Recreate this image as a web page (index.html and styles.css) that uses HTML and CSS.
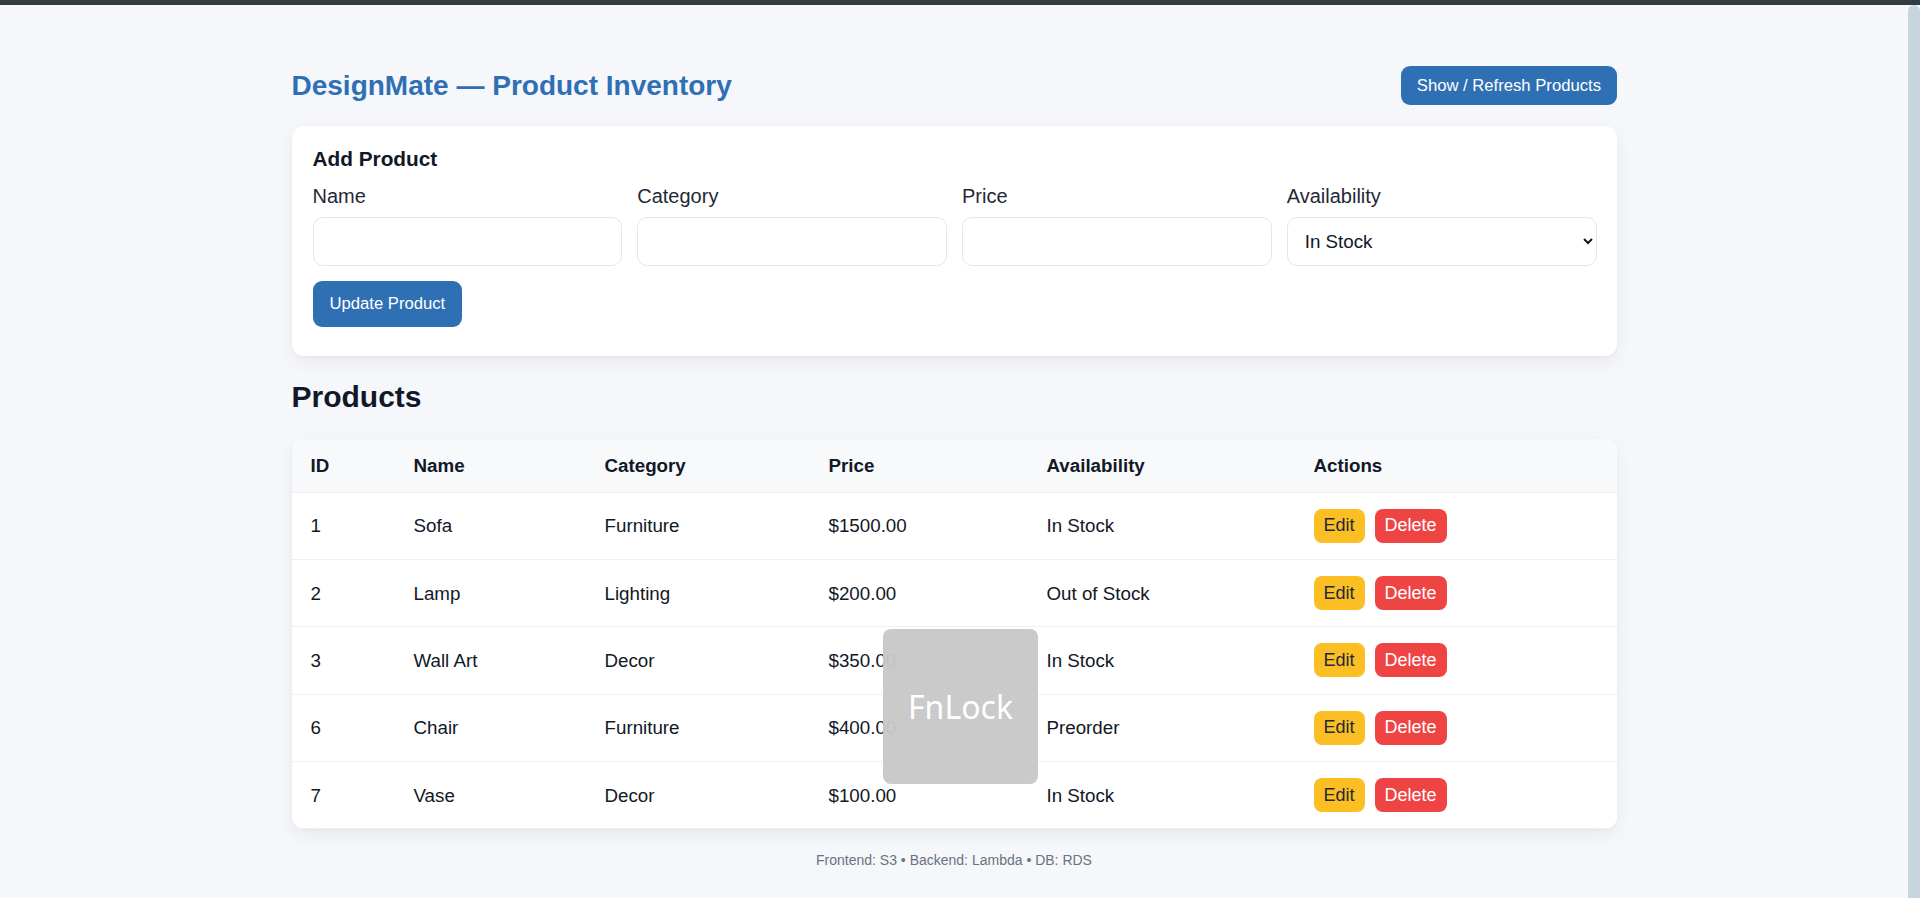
FILE: index.html
```html
<!DOCTYPE html>
<html lang="en">
<head>
<meta charset="utf-8">
<title>DesignMate — Product Inventory</title>
<link rel="stylesheet" href="styles.css">
</head>
<body>
<div class="topbar"></div>
<div class="viewport">
  <main class="page">
    <div class="container">
      <header class="header">
        <h1 class="title">DesignMate — Product Inventory</h1>
        <button class="btn btn-primary btn-refresh">Show / Refresh Products</button>
      </header>

      <section class="card form-card">
        <h3 class="form-title">Add Product</h3>
        <div class="form-grid">
          <div class="field">
            <label class="label">Name</label>
            <input class="input" type="text">
          </div>
          <div class="field">
            <label class="label">Category</label>
            <input class="input" type="text">
          </div>
          <div class="field">
            <label class="label">Price</label>
            <input class="input" type="text">
          </div>
          <div class="field">
            <label class="label">Availability</label>
            <select class="input select">
              <option>In Stock</option>
              <option>Out of Stock</option>
              <option>Preorder</option>
            </select>
          </div>
        </div>
        <button class="btn btn-primary btn-update">Update Product</button>
      </section>

      <h2 class="section-title">Products</h2>

      <section class="card table-card">
        <table class="table">
          <thead>
            <tr>
              <th class="c-id">ID</th>
              <th class="c-name">Name</th>
              <th class="c-cat">Category</th>
              <th class="c-price">Price</th>
              <th class="c-avail">Availability</th>
              <th class="c-act">Actions</th>
            </tr>
          </thead>
          <tbody>
            <tr><td>1</td><td>Sofa</td><td>Furniture</td><td>$1500.00</td><td>In Stock</td><td><div class="actions"><button class="btn-sm btn-edit">Edit</button><button class="btn-sm btn-del">Delete</button></div></td></tr>
            <tr><td>2</td><td>Lamp</td><td>Lighting</td><td>$200.00</td><td>Out of Stock</td><td><div class="actions"><button class="btn-sm btn-edit">Edit</button><button class="btn-sm btn-del">Delete</button></div></td></tr>
            <tr><td>3</td><td>Wall Art</td><td>Decor</td><td>$350.00</td><td>In Stock</td><td><div class="actions"><button class="btn-sm btn-edit">Edit</button><button class="btn-sm btn-del">Delete</button></div></td></tr>
            <tr><td>6</td><td>Chair</td><td>Furniture</td><td>$400.00</td><td>Preorder</td><td><div class="actions"><button class="btn-sm btn-edit">Edit</button><button class="btn-sm btn-del">Delete</button></div></td></tr>
            <tr><td>7</td><td>Vase</td><td>Decor</td><td>$100.00</td><td>In Stock</td><td><div class="actions"><button class="btn-sm btn-edit">Edit</button><button class="btn-sm btn-del">Delete</button></div></td></tr>
          </tbody>
        </table>
      </section>

      <footer class="footer">Frontend: S3 • Backend: Lambda • DB: RDS</footer>
    </div>
  </main>
  <div class="scrollbar"></div>
</div>
<div class="osd">FnLock</div>
</body>
</html>
```

FILE: styles.css
```css
* { box-sizing: border-box; }

html, body {
  margin: 0;
  height: 100%;
}

body {
  display: flex;
  flex-direction: column;
  overflow: hidden;
  background: #f5f7fb;
  font-family: "Liberation Sans", Arial, sans-serif;
  color: #111827;
}

.topbar {
  height: 5px;
  flex: none;
  background: #323c41;
}

.viewport {
  flex: 1;
  display: flex;
  min-height: 0;
}

.page {
  flex: 1;
  min-width: 0;
}

.scrollbar {
  width: 12px;
  flex: none;
  background: #c8d5de;
  border-radius: 6px 6px 0 0;
}

.container {
  width: 1325px;
  margin: 0 auto;
}

.header {
  display: flex;
  align-items: center;
  justify-content: space-between;
  padding-top: 61px;
  margin-bottom: 21px;
}

.title {
  margin: 0;
  font-size: 28px;
  font-weight: 700;
  color: #2f6fb4;
  line-height: 32px;
}

.btn {
  font-family: "Liberation Sans", Arial, sans-serif;
  font-size: 16.67px;
  border: none;
  cursor: pointer;
}

.btn-primary {
  background: #2f6fb3;
  color: #ffffff;
  border-radius: 9px;
}

.btn-refresh {
  height: 39px;
  padding: 0 15.5px;
}

.card {
  background: #ffffff;
  border-radius: 12px;
  box-shadow: 0 6px 18px rgba(17, 24, 39, 0.06), 0 1px 3px rgba(17, 24, 39, 0.03);
}

.form-card {
  padding: 20.5px 20px 29px 21px;
}

.form-title {
  margin: 0 0 14px;
  font-size: 20.8px;
  font-weight: 700;
  color: #111827;
  line-height: 24px;
}

.form-grid {
  display: grid;
  grid-template-columns: repeat(4, 1fr);
  column-gap: 15px;
}

.field {
  display: flex;
  flex-direction: column;
}

.label {
  font-size: 20px;
  line-height: 22px;
  color: #1f2937;
  margin-bottom: 10px;
}

.input {
  height: 49px;
  width: 100%;
  border: 1px solid #e3e6ee;
  border-radius: 10px;
  background: #ffffff;
  padding: 0 14px;
  font-family: "Liberation Sans", Arial, sans-serif;
  font-size: 18.75px;
  color: #111827;
}

.select {
  padding-left: 13px;
  padding-right: 6px;
}

.btn-update {
  margin-top: 15px;
  height: 46px;
  padding: 0 17px;
  border-radius: 9px;
}

.section-title {
  margin: 24px 0 25px;
  font-size: 30px;
  font-weight: 700;
  line-height: 34px;
  color: #111827;
}

.table-card {
  overflow: hidden;
}

.table {
  width: 100%;
  border-collapse: collapse;
  table-layout: fixed;
  font-size: 18.75px;
  color: #111827;
}

.table th {
  text-align: left;
  font-weight: 700;
  background: #f8f9fb;
  padding: 16px 19px;
  line-height: 21px;
  border-bottom: 1px solid #eef0f4;
}

.table td {
  padding: 16.2px 19px 16.2px;
  line-height: 21px;
  border-bottom: 1px solid #eef0f4;
  vertical-align: middle;
}

.c-id { width: 103px; }
.c-name { width: 191px; }
.c-cat { width: 224px; }
.c-price { width: 218px; }
.c-avail { width: 267px; }

.actions {
  display: flex;
  gap: 10px;
}

.btn-sm {
  height: 34px;
  padding: 0 10px;
  border: none;
  border-radius: 8px;
  font-family: "Liberation Sans", Arial, sans-serif;
  font-size: 18px;
  cursor: pointer;
}

.btn-edit {
  background: #fbbf24;
  color: #1f2937;
}

.btn-del {
  background: #ef4444;
  color: #ffffff;
}

.footer {
  margin-top: 23px;
  text-align: center;
  font-size: 14px;
  line-height: 16px;
  color: #6b7280;
}

.osd {
  position: absolute;
  left: 883px;
  top: 629px;
  width: 155px;
  height: 155px;
  border-radius: 8px;
  background: rgba(200, 200, 200, 0.96);
  color: #ffffff;
  font-family: "Noto Sans", "Open Sans", sans-serif;
  font-size: 32px;
  display: flex;
  align-items: center;
  justify-content: center;
}
```
